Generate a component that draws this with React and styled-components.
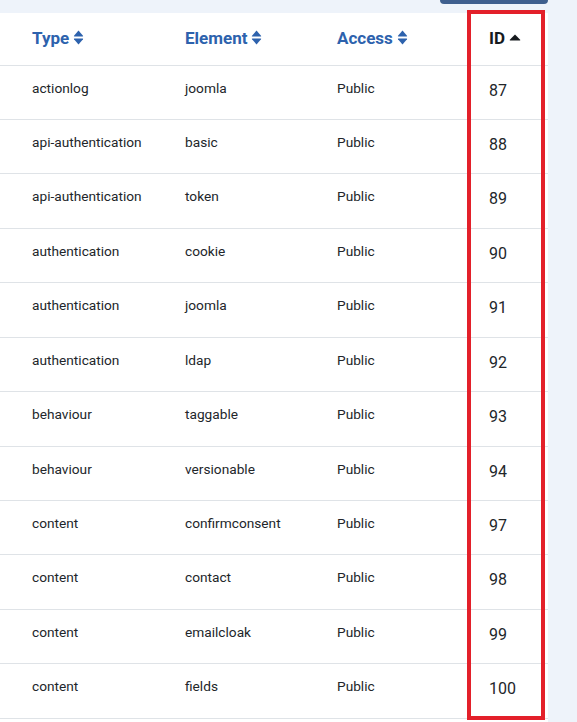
import React from "react";
import styled, { createGlobalStyle } from "styled-components";

const GlobalStyle = createGlobalStyle`
  html, body { margin: 0; padding: 0; }
  body {
    background: #eef3fa;
    font-family: Roboto, "Noto Sans", "Liberation Sans", sans-serif;
    color: #22262a;
    overflow: hidden;
  }
`;

const Page = styled.div`
  position: relative;
  display: flex;
  flex-direction: column;
  width: 577px;
  height: 722px;
  background: #eef3fa;
  overflow: hidden;
`;

const Toolbar = styled.div`
  display: flex;
  justify-content: flex-end;
  flex: 0 0 13px;
  padding-right: 29px;
`;

const ToolbarButton = styled.div`
  width: 108px;
  height: 4px;
  background: #3f5f8e;
  border-radius: 0 0 4px 4px;
`;

const Card = styled.div`
  flex: 1;
  width: 548px;
  background: #ffffff;
`;

const Table = styled.table`
  width: 548px;
  border-collapse: collapse;
  table-layout: fixed;
`;

const HeadCell = styled.th`
  width: ${(p) => p.$w || "auto"};
  height: 52px;
  padding: 0 0 2px 32px;
  text-align: left;
  vertical-align: middle;
  font-size: 17px;
  font-weight: 700;
  color: ${(p) => (p.$active ? "#161a1e" : "#2d62ad")};
  border-bottom: 1px solid #dfe3e7;
  box-sizing: border-box;
`;

const HeadInner = styled.span`
  display: inline-flex;
  align-items: center;
  gap: 4px;
`;

const Row = styled.tr`
  border-bottom: 1px solid #dfe3e7;
`;

const Cell = styled.td`
  height: 54.45px;
  padding: ${(p) => (p.$id ? "13px" : "12px")} 0 0 32px;
  box-sizing: border-box;
  vertical-align: top;
  font-size: ${(p) => (p.$id ? "16px" : "13.7px")};
  line-height: ${(p) => (p.$id ? "24px" : "21px")};
  color: #22262a;
  white-space: nowrap;
`;

const Highlight = styled.div`
  position: absolute;
  left: 467px;
  top: 10px;
  width: 78px;
  height: 710px;
  border: 4px solid #e3202a;
  box-sizing: border-box;
  pointer-events: none;
`;

const SortBoth = () => (
  <svg width="11" height="17" viewBox="0 0 11 17" aria-hidden="true">
    <path d="M1 6.8 L5.5 1.6 L10 6.8 Q10.5 7.6 9.5 7.6 L1.5 7.6 Q0.5 7.6 1 6.8 Z" fill="#2d62ad" />
    <path d="M1 10.2 L5.5 15.4 L10 10.2 Q10.5 9.4 9.5 9.4 L1.5 9.4 Q0.5 9.4 1 10.2 Z" fill="#2d62ad" />
  </svg>
);

const SortUp = () => (
  <svg width="12" height="14" viewBox="0 0 12 14" aria-hidden="true">
    <path d="M0.8 8.8 L6 3.4 L11.2 8.8 Q11.6 9.5 10.8 9.5 L1.2 9.5 Q0.4 9.5 0.8 8.8 Z" fill="#161a1e" />
  </svg>
);

const rows = [
  ["actionlog", "joomla", "Public", 87],
  ["api-authentication", "basic", "Public", 88],
  ["api-authentication", "token", "Public", 89],
  ["authentication", "cookie", "Public", 90],
  ["authentication", "joomla", "Public", 91],
  ["authentication", "ldap", "Public", 92],
  ["behaviour", "taggable", "Public", 93],
  ["behaviour", "versionable", "Public", 94],
  ["content", "confirmconsent", "Public", 97],
  ["content", "contact", "Public", 98],
  ["content", "emailcloak", "Public", 99],
  ["content", "fields", "Public", 100],
];

export default function App() {
  return (
    <Page>
      <GlobalStyle />
      <Toolbar>
        <ToolbarButton />
      </Toolbar>
      <Card>
        <Table>
          <thead>
            <tr>
              <HeadCell $w="153px">
                <HeadInner>Type <SortBoth /></HeadInner>
              </HeadCell>
              <HeadCell $w="152px">
                <HeadInner>Element <SortBoth /></HeadInner>
              </HeadCell>
              <HeadCell $w="152px">
                <HeadInner>Access <SortBoth /></HeadInner>
              </HeadCell>
              <HeadCell $active>
                <HeadInner>ID <SortUp /></HeadInner>
              </HeadCell>
            </tr>
          </thead>
          <tbody>
            {rows.map((r) => (
              <Row key={r[3]}>
                <Cell>{r[0]}</Cell>
                <Cell>{r[1]}</Cell>
                <Cell>{r[2]}</Cell>
                <Cell $id>{r[3]}</Cell>
              </Row>
            ))}
          </tbody>
        </Table>
      </Card>
      <Highlight />
    </Page>
  );
}
